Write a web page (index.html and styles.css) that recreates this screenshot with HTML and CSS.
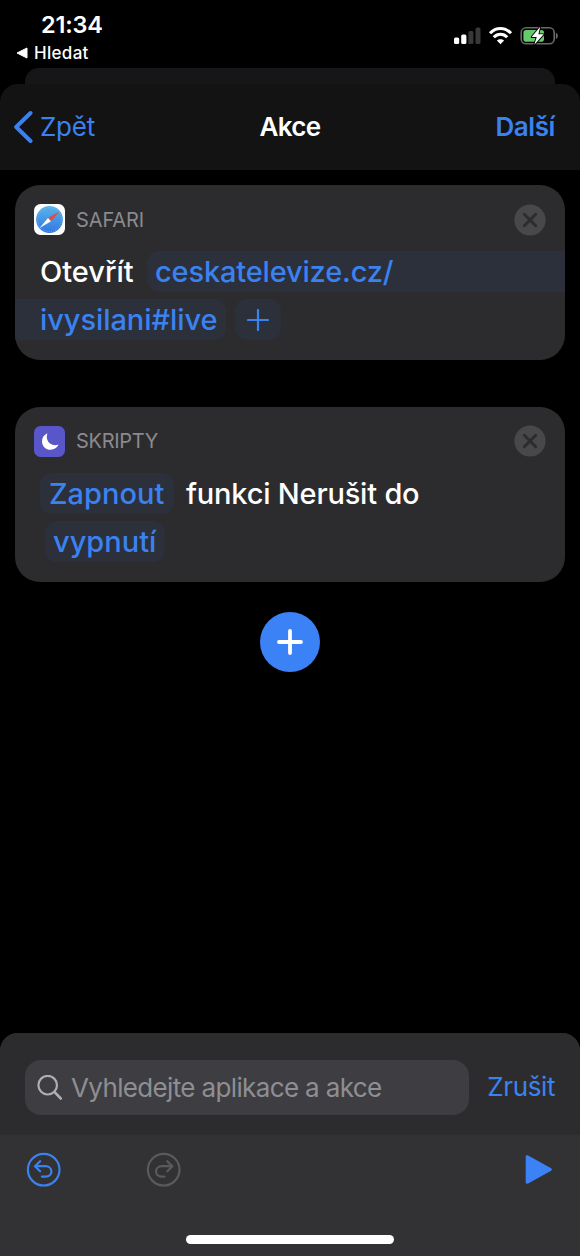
FILE: index.html
```html
<!DOCTYPE html>
<html lang="cs">
<head>
<meta charset="utf-8">
<title>Akce</title>
<link rel="stylesheet" href="styles.css">
</head>
<body>
<div class="screen">
  <header class="status">
    <div class="status-left">
      <div class="clock">21:34</div>
      <div class="return"><svg width="12" height="12" viewBox="0 0 12 12"><path d="M1 6 11 1v10z" fill="#fff" stroke="#fff" stroke-linejoin="round"/></svg><span class="return-label">Hledat</span></div>
    </div>
    <svg class="status-icons" width="106" height="22" viewBox="0 0 106 22">
      <rect x="0" y="11.5" width="5.2" height="6.5" rx="1.5" fill="#fff"/>
      <rect x="7.2" y="8.5" width="5.2" height="9.5" rx="1.5" fill="#fff"/>
      <rect x="14.4" y="5" width="5" height="13" rx="1.5" fill="#38383a"/>
      <rect x="21.5" y="1.5" width="5" height="16.5" rx="1.5" fill="#38383a"/>
      <g fill="none" stroke="#fff" stroke-width="3.1"><path d="M36 7.3C42 .8 51 .8 57 7.3"/><path d="M39.8 11.3c3.8-4 9.6-4 13.4 0"/></g>
      <path d="M46.5 18.3l-3.6-3.7c2-1.9 5.2-1.9 7.2 0z" fill="#fff"/>
      <rect x="67.2" y="1.8" width="33" height="16" rx="4.8" fill="none" stroke="#69696b" stroke-width="1.6"/>
      <path d="M101.9 6.8c2.6 1 2.6 5.2 0 6.2z" fill="#69696b"/>
      <rect x="69.4" y="4" width="20.6" height="11.7" rx="2.8" fill="#65cb69"/>
      <path d="M86.2.8 77.6 11h5.1l-2.4 7.8 9.4-10.5h-5.3z" fill="#fff" stroke="#000" stroke-width="1.8" paint-order="stroke" stroke-linejoin="round"/>
    </svg>
  </header>
  <div class="back-sheet"></div>
  <nav class="nav">
    <div class="back"><svg width="20" height="34" viewBox="0 0 20 34"><path d="M17.5 3 3.2 17l14.3 14" fill="none" stroke="#3b82f0" stroke-width="4" stroke-linecap="round" stroke-linejoin="round"/></svg><span class="back-label">Zpět</span></div>
    <div class="title">Akce</div>
    <div class="next">Další</div>
  </nav>
  <main class="actions">
    <section class="card">
      <div class="card-head">
        <svg width="31" height="31" viewBox="0 0 31 31">
          <defs><linearGradient id="compass" x1="0" y1="0" x2="0" y2="1"><stop offset="0" stop-color="#58b5ec"/><stop offset="1" stop-color="#3377df"/></linearGradient></defs>
          <rect width="31" height="31" rx="6.5" fill="#fff"/>
          <circle cx="15.5" cy="15.5" r="13.4" fill="url(#compass)"/>
          <circle cx="15.5" cy="15.5" r="12" fill="none" stroke="#9fcaf4" stroke-width="1" stroke-dasharray=".5 1.6"/>
          <path d="M25.6 7.2 14 14.1l3 3.1z" fill="#e24a46"/><path d="M5.600 24 14 14.100l3 3.100z" fill="#fff"/>
        </svg>
        <span class="app app-safari">SAFARI</span>
        <svg class="close" width="32" height="32" viewBox="0 0 32 32"><circle cx="16" cy="16" r="15.6" fill="#48484a"/><path d="m10.3 10.3 11.4 11.4m0-11.4L10.3 21.7" stroke="#2c2c2e" stroke-width="3" stroke-linecap="round"/></svg>
      </div>
      <div class="line">
        <span class="word open">Otevřít</span>
        <span class="chip url-start"><span class="url-a">ceskatelevize.cz/</span></span>
      </div>
      <div class="line">
        <span class="chip url-end"><span class="url-b">ivysilani#live</span></span>
        <span class="chip add-url"><svg width="22" height="22" viewBox="0 0 22 22"><path d="M11 1v20M1 11h20" stroke="#3b82f0" stroke-width="2.2" stroke-linecap="round"/></svg></span>
      </div>
    </section>
    <section class="card">
      <div class="card-head">
        <svg width="31" height="31" viewBox="0 0 31 31"><rect width="31" height="31" rx="6.5" fill="#5956ca"/><path d="M13.5 7.2C9.9 8.7 7.9 11.8 8 15.5c.1 4.7 3.8 8.3 8.5 8.3 3.7 0 6.7-1.9 8-5.2-2 .8-4.4.8-6.500-.1-4.300-1.700-6.300-6.600-4.500-11.300z" fill="#fff"/></svg>
        <span class="app app-scripts">SKRIPTY</span>
        <svg class="close" width="32" height="32" viewBox="0 0 32 32"><circle cx="16" cy="16" r="15.6" fill="#48484a"/><path d="m10.3 10.3 11.4 11.4m0-11.4L10.3 21.7" stroke="#2c2c2e" stroke-width="3" stroke-linecap="round"/></svg>
      </div>
      <div class="line">
        <span class="chip turn-on"><span class="t-on">Zapnout</span></span>
        <span class="word function">funkci Nerušit do</span>
      </div>
      <div class="line">
        <span class="chip turn-off"><span class="t-off">vypnutí</span></span>
      </div>
    </section>
    <div class="add"><svg width="26" height="26" viewBox="0 0 26 26"><path d="M13 2v22M2 13h22" stroke="#fff" stroke-width="3.8" stroke-linecap="round"/></svg></div>
  </main>
  <footer class="dock">
    <div class="search-row">
      <div class="field"><svg width="26" height="26" viewBox="0 0 26 26"><circle cx="10.7" cy="10.2" r="9.3" fill="none" stroke="#aeaeb2" stroke-width="2.2"/><path d="m17.6 17.1 6.100 6.300" stroke="#aeaeb2" stroke-width="2.800" stroke-linecap="round"/></svg><span class="placeholder">Vyhledejte aplikace a akce</span></div>
      <div class="cancel">Zrušit</div>
    </div>
    <div class="toolbar">
      <svg class="tool" width="34" height="34" viewBox="-.7 .3 34 34" fill="none" stroke="#3b82f0" stroke-width="2.2" stroke-linecap="round" stroke-linejoin="round"><circle cx="17" cy="17" r="15.8"/><path d="M13.4 8.500 8.300 13.500l5.100 5.100M8.600 13.500h10.200c3.500 0 5.900 2.300 5.900 5.200s-2.400 5.200-5.900 5.200h-3.600"/></svg>
      <svg class="tool redo" width="34" height="34" viewBox="0.300 .3 34 34" fill="none" stroke="#5a5a5c" stroke-width="2.200" stroke-linecap="round" stroke-linejoin="round"><circle cx="17" cy="17" r="15.800"/><path d="m20.600 8.500 5.100 5-5.100 5.100M25.400 13.500H15.200c-3.500 0-5.900 2.300-5.900 5.200s2.400 5.200 5.900 5.200h2.600"/></svg>
      <svg class="tool play" width="27" height="30" viewBox="0 .5 27 30"><path d="M2 2v26l23.500-13z" fill="#3b82f7" stroke="#3b82f7" stroke-width="2.600" stroke-linejoin="round"/></svg>
    </div>
    <div class="home"></div>
  </footer>
</div>
</body>
</html>
```
FILE: styles.css
```css
* { box-sizing: border-box; }
body { margin: 0; background: #000; font-family: Inter, "Noto Sans", sans-serif; color: #fff; }
svg { display: block; flex: none; }
.screen { width: 580px; height: 1256px; display: flex; flex-direction: column; white-space: nowrap; overflow: hidden; }
.status { height: 68px; flex: none; display: flex; justify-content: space-between; padding: 0 20px 0 16px; }
.clock { margin: 10px 0 0 25px; font-size: 23.5px; line-height: 30px; font-weight: 600; letter-spacing: -.2px; }
.return { display: flex; align-items: center; height: 26px; gap: 6px; }
.return-label { font-size: 17px; font-weight: 500; letter-spacing: .3px; }
.status-icons { margin-top: 26px; }
.back-sheet { height: 16px; flex: none; margin: 0 25px; background: #161618; border-radius: 14px 14px 0 0; }
.nav { height: 86px; flex: none; display: grid; grid-template-columns: 1fr auto 1fr; align-items: center; padding: 0 25px 0 13px; background: #131314; border-radius: 18px 18px 0 0; font-size: 26px; line-height: 34px; }
.nav { padding: 0 13px; }
.back { display: flex; align-items: center; gap: 7px; color: #3b82f0; letter-spacing: -.25px; }
.title { font-weight: 600; letter-spacing: -.7px; }
.next { padding-right: 12px; font-weight: 600; color: #3b82f0; text-align: right; letter-spacing: -.4px; }
.actions { flex: 1; display: flex; flex-direction: column; padding: 15px 15px 0; }
.card { height: 175px; flex: none; padding-top: 19px; margin-bottom: 46.5px; background: #2c2c2e; border-radius: 25px; overflow: hidden; }
.card-head { height: 31px; display: flex; align-items: center; padding: 0 19px; margin-bottom: 16px; }
.app { margin-left: 11px; font-size: 20px; color: #8a8a8e; letter-spacing: -.1px; }
.app-scripts { letter-spacing: -.3px; }
.close { margin-left: auto; }
.line { height: 41px; display: flex; align-items: center; margin-bottom: 7px; padding-left: 25px; font-size: 29px; line-height: 41px; font-weight: 500; }
.chip { height: 41px; display: block; background: #2b303a; border-radius: 12px; color: #3b82f0; }
.open { width: 107px; }
.url-start { flex: 1; padding-left: 8px; border-radius: 12px 0 0 12px; letter-spacing: -.17px; }
.url-end { width: 211px; margin-left: -25px; padding-left: 25px; border-radius: 0 12px 12px 0; letter-spacing: -.07px; }
.add-url { width: 46px; margin-left: 9px; display: grid; place-items: center; }
.turn-on { width: 134px; padding-left: 9px; }
.function { margin-left: 12px; letter-spacing: -.2px; }
.turn-off { width: 120px; margin-left: 5px; padding-left: 8px; }
.add { width: 60px; height: 60px; align-self: center; margin-top: -16px; border-radius: 50%; background: #3b82f7; display: grid; place-items: center; }
.dock { height: 223px; flex: none; display: flex; flex-direction: column; background: #323234; border-radius: 18px 18px 0 0; overflow: hidden; }
.search-row { height: 102px; flex: none; display: flex; justify-content: space-between; padding: 27px 25px 0; background: #2c2c2e; font-size: 26px; line-height: 54px; }
.field { width: 444px; height: 55px; flex: none; display: flex; align-items: center; padding-left: 12px; background: #3e3e42; border-radius: 16px; color: #8e8e93; }
.placeholder { margin-left: 8px; letter-spacing: -.64px; line-height: 52px; }
.cancel { color: #3b82f0; letter-spacing: -.4px; }
.toolbar { display: flex; align-items: center; height: 34px; margin-top: 18px; padding: 0 28px 0 26px; }
.tool { overflow: visible; }
.redo { margin-left: 87px; }
.play { margin-left: auto; }
.home { width: 208px; height: 9px; flex: none; margin: 48px auto 0; border-radius: 5px; background: #fff; }
```
